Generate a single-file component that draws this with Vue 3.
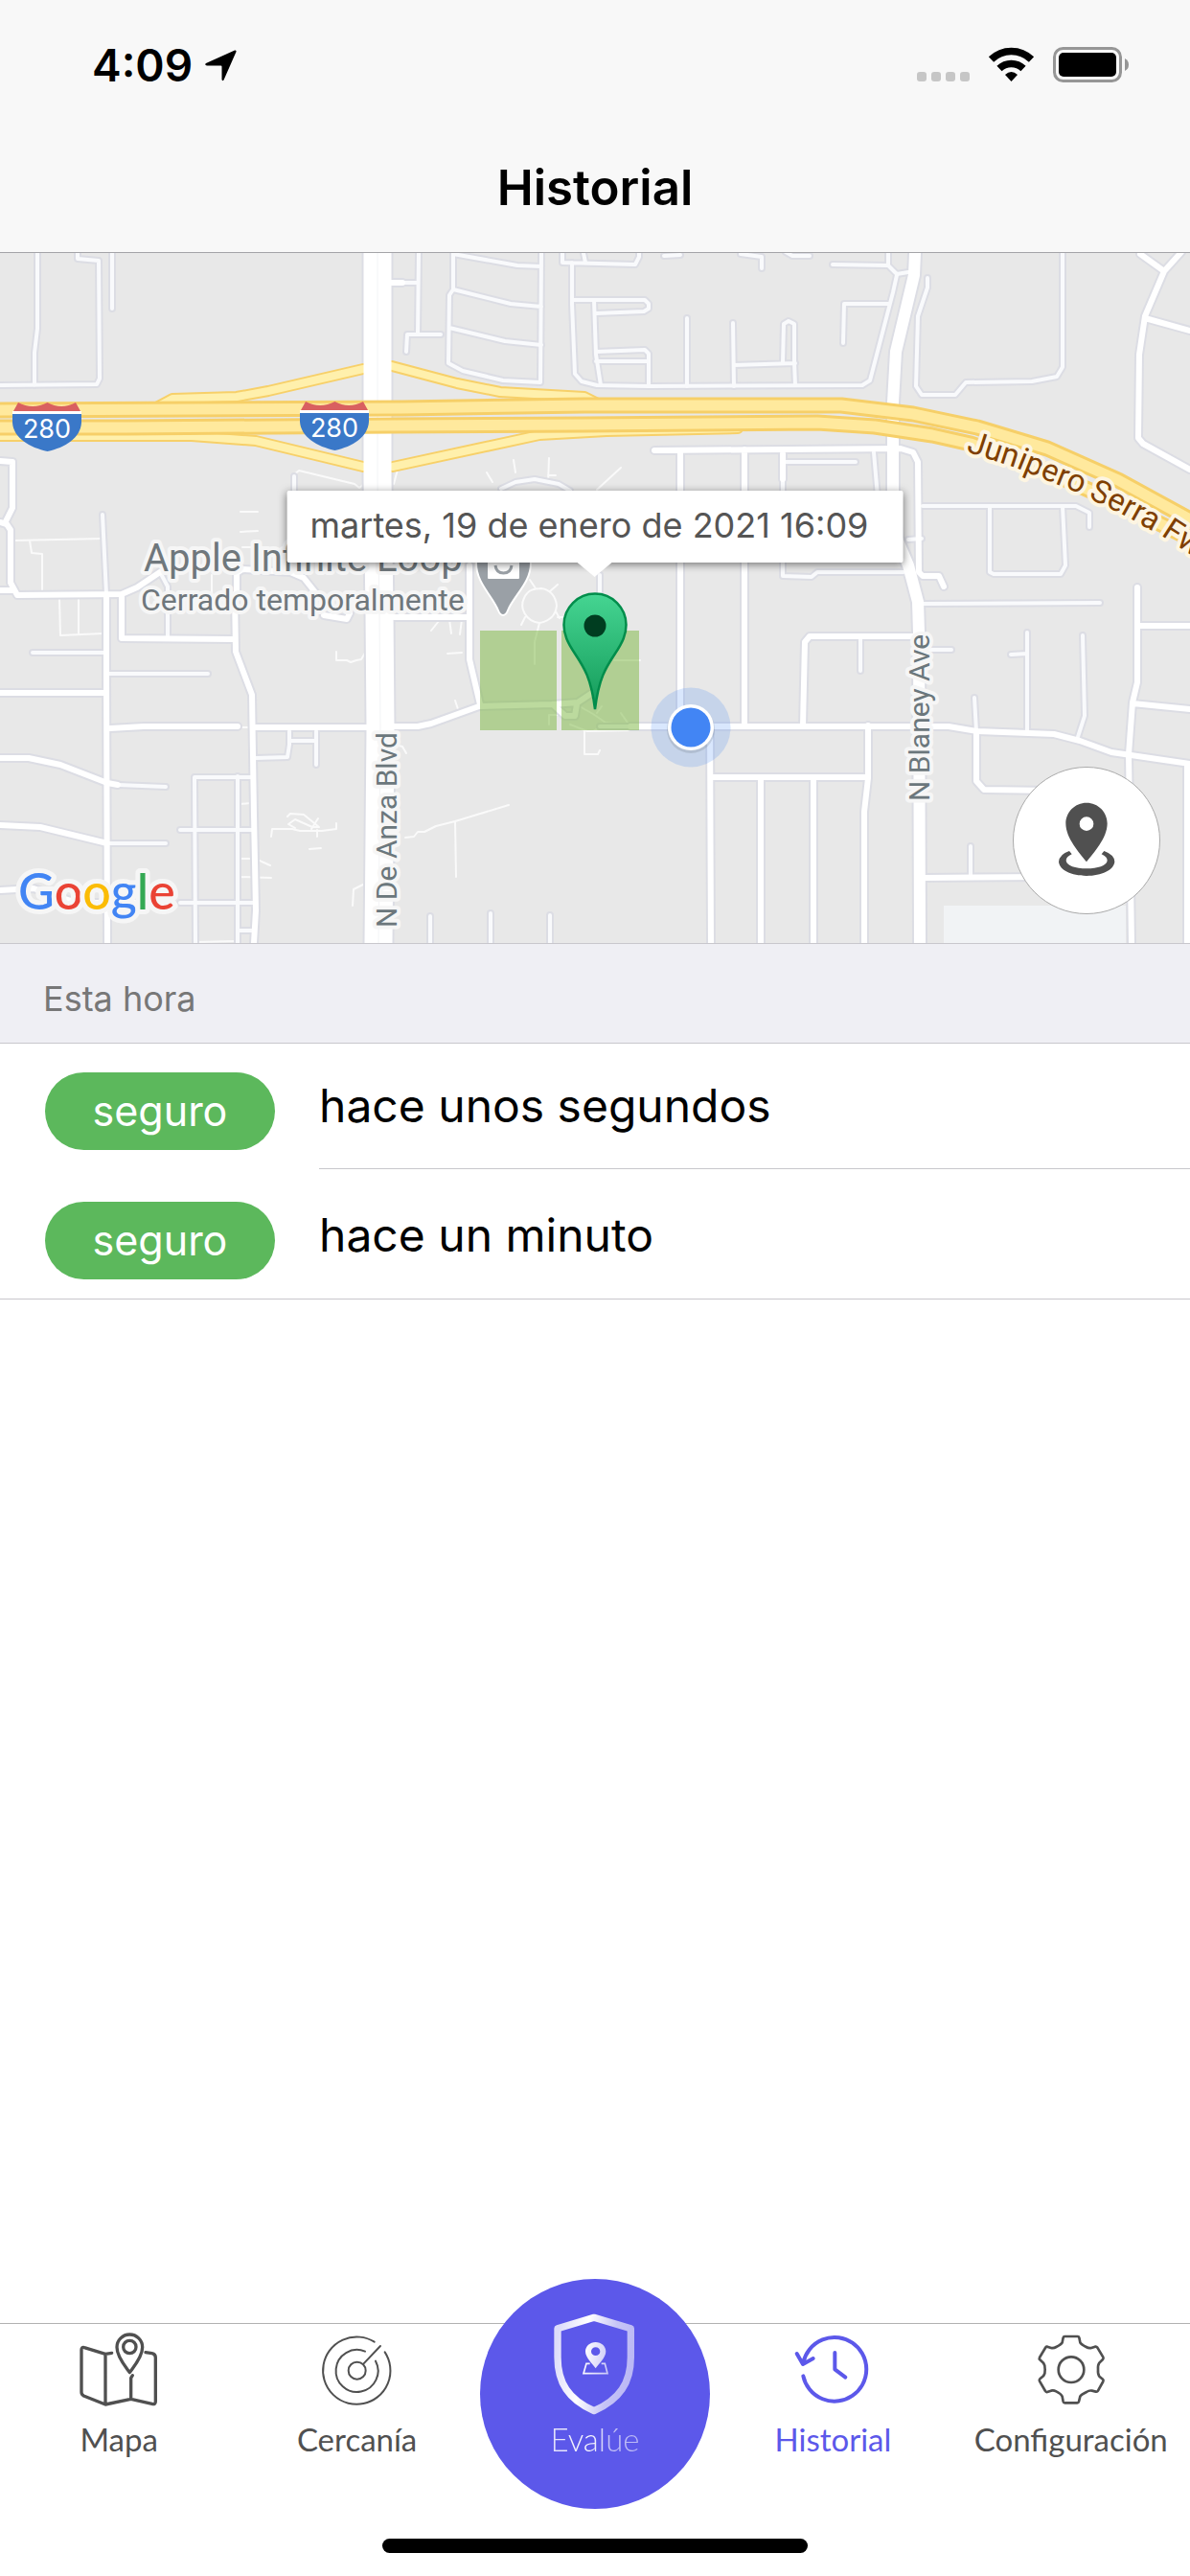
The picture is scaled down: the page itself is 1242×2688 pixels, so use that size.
<script setup>
const entries = [
  { id: 1, status: 'seguro', when: 'hace unos segundos' },
  { id: 2, status: 'seguro', when: 'hace un minuto' },
]

const googleLetters = [
  ['G', '#4285f4'],
  ['o', '#ea4335'],
  ['o', '#fbbc05'],
  ['g', '#4285f4'],
  ['l', '#34a853'],
  ['e', '#ea4335'],
]

// Footpaths and parking lanes
const paths = [
  'M15 564L107 562M31 564L33 577 44 578 44 620M62 625L63 663 108 661M82 625V661',
  'M307 495L312 491 370 505 375 509 380 505M251 534H269M251 555L269 554M253 571H280M221 600V620',
  'M351 680V689H362L366 691 372 689 377 688 383 678M283 873L284 865H305L313 867 336 867 351 865V859',
  'M300 852L303 849 317 850 333 863 326 863 308 855 301 860 308 864M325 865L332 854M331 866V873M323 886L335 885',
  'M368 945L369 928 379 923M250 839L262 838M250 896H268L273 899 282 903M250 915L283 916M205 983L246 982',
  'M508 493L514 503M536 480L538 493M573 478L572 503M572 496H580M623 511L648 488M411 505L416 486',
  'M563 650L558 670V693M563 650C548 648 542 634 547 624 551 615 558 614 565 614 574 615 580 622 581 632 580 642 574 648 563 650M582 644H600M580 638L584 645M548 644L544 652M553 605L559 614M574 617L582 610',
  'M450 658L458 648M469 646L471 661M482 646L480 662M467 682L482 681M475 731L478 740M641 689H668',
  'M610 762V787H624L626 783M573 756V746H583M595 756L613 763 660 762M648 744L657 757M605 737L610 740 619 745 632 754 657 757M619 763L634 754M623 744L628 737',
  'M423 874L432 873 436 868H443L455 862 475 857 531 840M475 857L476 915M416 778L420 779 424 786M248 759H262',
]

// Narrow residential streets
const lanes = [
  'M39 264V343L36 368V402M81 264V270L103 272 104 395 101 401 0 402M117 264V322',
  'M410 295H435M437 264L436 348M460 349H425L424 367',
  'M473 264V302L469 308 468 379 483 387 525 397 564 399 565 264M473 265L540 277 565 278M473 302L533 317 565 320M469 342L527 356 565 360',
  'M587 264V274L663 276 667 268V264M609 264L611 274M597 274V317L600 390 607 398 623 402 677 403 900 402 908 397 932 305 936 287',
  'M597 313H673L677 317V322L672 325 622 327M620 313L622 370 627 402M622 367L673 365 677 369V403M622 377H677',
  'M693 267L710 266M717 332V403M765 337L766 403M766 381L830 379M817 378L818 338 823 335 829 338V378L830 402',
  'M773 265L795 268V280M820 263L827 267H845M869 276L927 277 936 286 948 284M927 264V277M927 317H881L880 358',
  'M968 290V300L958 330 956 403 962 412H997L1008 399 1077 398 1103 393 1109 383V264',
  'M817 482H893M817 470V601L847 602 853 597H943M912 472L917 530M948 563L962 562',
  'M963 528H1123L1137 535V550M1033 528V597L1037 599H1107L1112 590 1109 528M964 630L1148 629',
  'M523 510L538 503 558 500 583 505 595 512M307 497V560M107 537L111 620',
  'M34 681H108M114 703H217M123 819L173 821M112 880H173M303 773H330M330 763V798M302 763V777L300 790 267 791',
  'M203 811H263M203 811L204 984M248 810V984M188 866H265M188 942H265M248 971H263M167 597L175 612V666',
  'M449 956V984M512 953V984M574 955V984M626 600V640M626 758H700',
  'M898 664V700M970 678H993M1072 660V765M1055 683L1072 682M1130 663L1132 747 1124 772M1017 728L1019 763M1013 883V915',
]

// Collector streets
const streets = [
  'M0 481L13 482V530L6 544M0 545L7 547 11 553V608L18 621 127 620 143 613 167 597M0 616H13',
  'M247 620V598L253 594 303 597 317 603 333 623M338 642L362 646 365 640M411 644H490M409 295H420',
  'M111 620V700L112 984M127 623V666L243 667M245 620L246 680 263 725 265 850 267 950 265 984M0 723H108',
  'M115 760L150 758H248M267 759H383M0 791H30L63 798 112 817 123 819M0 861L42 863 112 880M0 929L35 927 80 942H150',
  'M490 590V688L501 735M409 758H436L450 755 500 737 577 735 603 733 618 723M577 735L590 747H600L602 735M658 758H990L1020 763 1100 766 1127 773 1160 785 1242 797',
  'M683 470L940 468 953 472 958 482 959 597 963 601 980 601 985 612M710 470V757M777 469V757M817 470V500',
  'M1190 265L1215 283M1233 263L1215 283 1195 330 1189 370 1188 457 1193 463 1242 490M1195 332L1242 345',
  'M1187 613V712L1182 733 1178 787 1181 984M1187 653H1242M1182 734L1242 740M1239 797V984',
  'M838 757L840 670 845 664H955M1019 763V815L1027 824 1100 825M906 757V812L902 847V984M743 811H906',
  'M741 757L742 984M794 811V984M849 811V984M965 916L1090 915',
]

const avenue = 'M955 264L954 287 935 367 932 420V530L936 562 948 590 958 628 959 660 960 984'
const boulevard = 'M394 264V500L396 640 397 760 395 984'

const ramps = [
  'M165 424L180 416 247 414 280 408 379 385',
  'M409 382L477 400 522 409 610 414 630 424',
  'M0 455H200L267 460 379 487',
  'M410 487L563 454 633 450 770 447',
]

const freeway = [
  'M0 428L420 426 610 423H878L953 432 1020 446 1093 468 1167 501 1242 542',
  'M0 446L133 446 410 444 610 443 853 441 913 445 973 454 1013 463 1087 489 1167 525 1242 562',
]
</script>

<template>
  <div class="app">
    <header class="header">
      <div class="status">
        <div class="clock">
          <span>4:09</span>
          <svg width="34" height="34" viewBox="213 50 34 34" aria-hidden="true">
            <path d="M245 51.500Q247 51 246.500 53L233.500 82.500Q232 84 231.500 82V68.500Q231.500 67.500 230.500 67.500H216Q213 66.500 215 65Z" />
          </svg>
        </div>
        <svg width="222" height="40" viewBox="957 48 222 40" aria-hidden="true">
          <g fill="#c6c6c6">
            <rect x="957" y="75" width="10" height="10" rx="3" />
            <rect x="972" y="75" width="10" height="10" rx="3" />
            <rect x="987" y="75" width="10" height="10" rx="3" />
            <rect x="1002" y="75" width="10" height="10" rx="3" />
          </g>
          <g fill="none" stroke="#000" stroke-width="7.500">
            <path d="M1034.500 62A30 30 0 0 1 1076.500 62" />
            <path d="M1043 71.500A18 18 0 0 1 1068 71.500" />
          </g>
          <path d="M1055.500 85L1049 78Q1055.500 72 1062 78Z" />
          <rect x="1100.500" y="50.500" width="69" height="34" rx="9" fill="none" stroke="#969696" stroke-width="3" />
          <rect x="1105" y="55" width="60" height="25" rx="5" />
          <path d="M1174 61Q1178 63 1178 67.500T1174 74Z" fill="#969696" />
        </svg>
      </div>
      <h1 class="title">Historial</h1>
    </header>

    <main class="main">
      <section class="map" aria-label="Mapa">
        <svg class="canvas" viewBox="0 264 1242 720" preserveAspectRatio="xMidYMid slice">
          <defs>
            <linearGradient id="pin" x1="0" y1="0" x2="0" y2="1">
              <stop offset="0" stop-color="#45d592" />
              <stop offset="1" stop-color="#149a59" />
            </linearGradient>
            <path id="freeway-label" d="M1008 471L1060 488 1122 513 1172 537 1217 562 1260 590" />
          </defs>

          <rect y="264" width="1242" height="720" fill="#e8e8e8" />
          <rect x="985" y="945" width="190" height="39" fill="#f1f3f5" />

          <g class="roads">
            <path v-for="d in paths" :key="d" :d="d" stroke="#fafafa" stroke-width="2" />
            <g stroke="#dcdde4">
              <path v-for="d in lanes" :key="d" :d="d" stroke-width="8" />
              <path v-for="d in streets" :key="d" :d="d" stroke-width="10" />
              <path :d="avenue" stroke-width="16" />
              <path :d="boulevard" stroke-width="33" />
            </g>
            <path v-for="d in lanes" :key="d" :d="d" stroke="#f9fafc" stroke-width="4" />
            <g stroke="#fff">
              <path v-for="d in streets" :key="d" :d="d" stroke-width="6" />
              <path :d="avenue" stroke-width="12" />
            </g>
            <path v-for="d in ramps" :key="d" :d="d" stroke="#f7d069" stroke-width="12" />
            <path v-for="d in ramps" :key="d" :d="d" stroke="#fff0ac" stroke-width="8" />
            <path :d="boulevard" stroke="#fff" stroke-width="29" />
            <path :d="boulevard" stroke="#f3f4f6" stroke-width="1" />
            <path v-for="d in freeway" :key="d" :d="d" stroke="#f6cf68" stroke-width="17" />
            <path v-for="d in freeway" :key="d" :d="d" stroke="#ffe99d" stroke-width="11" />
          </g>

          <g v-for="shield in [[0, 0], [300, -1]]" :key="shield[0]" :transform="`translate(${shield})`">
            <path d="M13 432H85V441C84 457 68 467 49.500 471 31 467 14 457 13 441Z" fill="#3a78c8" />
            <path d="M14 429L19 420Q34 428 49.500 420 64 428 79 420L84 429Z" fill="#d96060" />
            <rect x="13" y="429" width="72" height="3" fill="#fff" />
            <text class="shield" x="49" y="457">280</text>
          </g>

          <g class="halo poi">
            <text x="150" y="596" font-size="40">Apple Infinite Loop</text>
            <text x="147" y="637" font-size="32">Cerrado temporalmente</text>
          </g>
          <g class="halo street">
            <text transform="translate(414 968) rotate(-90)">N De Anza Blvd</text>
            <text transform="translate(970 836) rotate(-90)">N Blaney Ave</text>
          </g>
          <text class="halo freeway"><textPath href="#freeway-label">Junipero Serra Fwy</textPath></text>

          <path d="M525 642Q522 642 520 637C514 622 497 608 497 588A28.500 28.500 0 0 1 554 588C554 608 536 622 530 637Q528 642 525 642Z" fill="#9aa0a6" stroke="#fff" stroke-width="2" />
          <rect x="509" y="580" width="33" height="24" rx="1" fill="#fff" />
          <path d="M517 590Q518 598 525.500 598T534 590" fill="none" stroke="#9aa0a6" stroke-width="3" />

          <g fill="rgba(122, 182, 62, 0.5)">
            <rect x="501" y="658" width="80" height="104" />
            <rect x="586" y="658" width="81" height="104" />
          </g>

          <circle cx="721" cy="759" r="41.500" fill="rgba(66, 133, 244, 0.2)" />
          <circle cx="721" cy="761" r="25" fill="rgba(60, 64, 67, 0.15)" />
          <circle cx="721" cy="759" r="24" fill="#fff" />
          <circle cx="721" cy="759" r="20.500" fill="#4285f4" />

          <path d="M621 740C617 708 610 697 600 682 592 670 588.500 662 588.500 652A32.500 32.500 0 0 1 653.500 652C653.500 662 650 670 642 682 632 697 625 708 621 740Z" fill="url(#pin)" stroke="#008d4b" stroke-width="2.500" />
          <circle cx="621" cy="653" r="11.500" fill="#003d20" />

          <text class="google" x="19" y="949">
            <tspan v-for="([letter, color], i) in googleLetters" :key="i" :fill="color">{{ letter }}</tspan>
          </text>
        </svg>

        <div class="tooltip">martes, 19 de enero de 2021 16:09</div>

        <button class="locate" type="button" aria-label="Centrar en mi ubicación">
          <svg width="60" height="80" viewBox="853 649 180 240" fill="#505050" aria-hidden="true">
            <path fill-rule="evenodd" d="M943 651C979 651 1008 680 1008 716 1008 762 965 808 943 836 921 808 878 762 878 716 878 680 907 651 943 651ZM943 695A22 22 0 1 0 943 739 22 22 0 1 0 943 695Z" />
            <path d="M889 802L897 812Q879 820 879 832C881 848 908 857 943 857S1006 848 1008 832Q1008 820 990 812L998 802Q1031 814 1031 836C1029 862 990 880 943 880S858 862 856 836Q858 812 889 802Z" />
          </svg>
        </button>
      </section>

      <h2 class="section">Esta hora</h2>
      <ul class="list">
        <li v-for="entry in entries" :key="entry.id" class="row">
          <span class="badge">{{ entry.status }}</span>
          <span class="when">{{ entry.when }}</span>
        </li>
      </ul>
    </main>

    <footer class="footer">
      <nav class="tabs">
        <a class="tab" href="#mapa">
          <svg class="icon" viewBox="246 213 252 252" stroke-width="10">
            <path d="M350 286L330 289 264 269Q255 266 255 276V409Q255 416 262 420L330 447 410 430 476 445Q487 448 487 438V300Q487 289 476 287L456 284M330 289V447M410 430V364L415 356" />
            <path d="M406 347C396 332 366 300 366 268A40 40 0 0 1 446 268C446 300 416 332 406 347Z" />
            <circle cx="406" cy="267" r="20" />
          </svg>
          <span>Mapa</span>
        </a>
        <a class="tab" href="#cercania">
          <svg class="icon" viewBox="992 213 252 252" stroke-width="6">
            <circle cx="1117" cy="341" r="27" />
            <path d="M1137 320L1190 264M1142 281A66 66 0 1 0 1175 311M1171 251A105.500 105.500 0 1 0 1204 283" />
          </svg>
          <span>Cercanía</span>
        </a>
        <a class="tab evaluate" href="#evalue">
          <svg width="88" height="108" viewBox="351 160 264 324" aria-hidden="true">
            <defs>
              <linearGradient id="silver" gradientUnits="userSpaceOnUse" x1="355" y1="300" x2="606" y2="340">
                <stop offset="0" stop-color="#dddcfa" />
                <stop offset="0.350" stop-color="#fff" />
                <stop offset="0.700" stop-color="#c6c4f6" />
                <stop offset="1" stop-color="#b9b7f5" />
              </linearGradient>
            </defs>
            <path d="M480 176L595 210V300C595 380 560 433 480 468 400 433 366 380 366 300V210Z" fill="none" stroke="url(#silver)" stroke-width="22" stroke-linejoin="round" />
            <path fill-rule="evenodd" fill="url(#silver)" d="M485 335C476 320 453 302 453 282 453 266 467 253 485 253S517 266 517 282C517 302 494 320 485 335ZM485 269A14 13 0 1 0 485 295 14 13 0 1 0 485 269Z" />
            <path d="M467 320H456L447 351H522L514 320H503" fill="none" stroke="url(#silver)" stroke-width="5" />
          </svg>
          <span>Evalúe</span>
        </a>
        <a class="tab active" href="#historial" aria-current="page">
          <svg class="icon" viewBox="202 213 252 252" stroke-width="12">
            <path d="M236 358A100 100 0 1 0 236 316M216 288L235 321 267 303M335 285V337L368 362" />
          </svg>
          <span>Historial</span>
        </a>
        <a class="tab" href="#configuracion">
          <svg class="icon" viewBox="947 213 252 252" stroke-width="8">
            <path d="M1053 234H1093Q1097 234 1098 238L1101 253Q1104 259 1120 267 1128 272 1136 270L1148 266Q1152 265 1155 269L1173 299Q1175 303 1172 306L1161 317Q1156 323 1157 338 1156 353 1161 359L1172 368Q1175 371 1173 375L1157 404Q1155 408 1150 407L1138 404Q1130 402 1121 408 1104 416 1101 422L1097 438Q1096 442 1092 442H1053Q1049 442 1048 438L1045 422Q1042 414 1026 406 1018 402 1010 404L998 408Q994 409 992 405L974 374Q972 370 975 367L986 358Q992 350 991 338 992 325 986 317L975 307Q972 304 974 300L992 270Q994 265 998 266L1010 270Q1018 272 1026 267 1042 259 1045 253L1048 238Q1049 234 1053 234Z" />
            <circle cx="1073" cy="338" r="40" />
          </svg>
          <span>Configuración</span>
        </a>
      </nav>
      <div class="home-indicator"></div>
    </footer>
  </div>
</template>

<style>
body {
  margin: 0;
  background: #fff;
}
</style>

<style scoped>
.app {
  display: flex;
  flex-direction: column;
  min-height: 100vh;
  font-family: Inter, "Liberation Sans", sans-serif;
  color: #000;
}

.header {
  background: #f8f8f8;
  border-bottom: 1px solid #a4a4a8;
}

.status {
  display: flex;
  align-items: center;
  justify-content: space-between;
  height: 136px;
  padding: 0 63px 0 96px;
}

.clock {
  display: flex;
  align-items: center;
  gap: 12px;
  font-size: 46px;
  font-weight: 600;
}

.title {
  margin: 0;
  padding-bottom: 7px;
  font-size: 51px;
  font-weight: 600;
  line-height: 120px;
  text-align: center;
}

.main {
  flex: 1;
}

.map {
  position: relative;
  height: 720px;
  overflow: hidden;
}

.canvas {
  display: block;
  width: 100%;
  height: 100%;
}

.roads {
  fill: none;
  stroke-linecap: round;
  stroke-linejoin: round;
}

.shield {
  fill: #fff;
  font-size: 27px;
  text-anchor: middle;
}

.halo {
  font-family: Roboto, sans-serif;
  paint-order: stroke;
  stroke: #f6f6f6;
  stroke-width: 8px;
  stroke-linejoin: round;
}

.poi {
  fill: #6f777c;
}

.street {
  fill: #6b777c;
  font-size: 30px;
}

.freeway {
  fill: #7f3f00;
  font-size: 33px;
  stroke: #fdf5e2;
}

.google {
  font-family: Lato, sans-serif;
  font-size: 52px;
  font-weight: 500;
  paint-order: stroke;
  stroke: #f6f6f6;
  stroke-width: 10px;
  stroke-linejoin: round;
}

.tooltip {
  position: absolute;
  top: 248px;
  left: 50%;
  padding: 0 36px 2px 24px;
  border-radius: 2px;
  background: #fff;
  box-shadow: 0 2px 8px rgba(0, 0, 0, 0.5);
  color: #555;
  font-size: 36px;
  line-height: 73px;
  white-space: nowrap;
  transform: translateX(-50%);
}

.tooltip::after {
  content: "";
  position: absolute;
  top: 100%;
  left: 50%;
  border: 18px solid transparent;
  border-top: 15px solid #fff;
  border-bottom: 0;
  transform: translateX(-50%);
}

.locate {
  position: absolute;
  right: 31px;
  bottom: 30px;
  display: grid;
  place-items: center;
  width: 154px;
  height: 154px;
  padding: 0;
  border: 1px solid #aaa;
  border-radius: 50%;
  background: #fff;
}

.section {
  margin: 0;
  padding: 14px 45px 2px;
  border: 1px solid #c8c7cc;
  border-width: 1px 0;
  background: #efeff4;
  color: #777;
  font-size: 36px;
  font-weight: 400;
  line-height: 87px;
}

.list {
  display: flex;
  flex-direction: column;
  gap: 4px;
  margin: 0;
  padding: 0;
  border-bottom: 1px solid #c8c7cc;
  list-style: none;
}

.row {
  position: relative;
  display: flex;
  align-items: flex-start;
  gap: 46px;
  padding: 30px 47px 20px;
}

.row:not(:last-child)::after {
  content: "";
  position: absolute;
  right: 0;
  bottom: 0;
  left: 333px;
  height: 1px;
  background: #c8c7cc;
}

.badge {
  width: 240px;
  border-radius: 41px;
  background: #5cb85c;
  color: #fff;
  font-size: 43px;
  line-height: 81px;
  text-align: center;
}

.when {
  font-size: 48px;
  line-height: 70px;
}

.footer {
  border-top: 1px solid #b2b2b2;
  background: #fff;
}

.tabs {
  display: grid;
  grid-template-columns: repeat(5, minmax(0, 1fr));
  align-items: start;
  padding-top: 6px;
}

.tab {
  display: flex;
  flex-direction: column;
  align-items: center;
  gap: 6px;
  color: #505050;
  font-family: Lato, sans-serif;
  font-size: 33px;
  line-height: 48px;
  text-decoration: none;
}

.active {
  color: #5c58ea;
}

.icon {
  width: 84px;
  height: 84px;
  fill: none;
  stroke: currentColor;
  stroke-linecap: round;
  stroke-linejoin: round;
}

.evaluate {
  box-sizing: border-box;
  justify-self: center;
  gap: 0;
  width: 240px;
  height: 240px;
  margin-top: -53px;
  padding-top: 35px;
  border-radius: 50%;
  background: #5c58ea;
  font-weight: 300;
}

.evaluate span {
  background: linear-gradient(90deg, #dddcfa, #fff 45%, #c6c4f6 65%, #b9b7f5);
  background-clip: text;
  color: transparent;
}

.home-indicator {
  width: 444px;
  height: 15px;
  margin: 31px auto 24px;
  border-radius: 8px;
  background: #000;
}
</style>
